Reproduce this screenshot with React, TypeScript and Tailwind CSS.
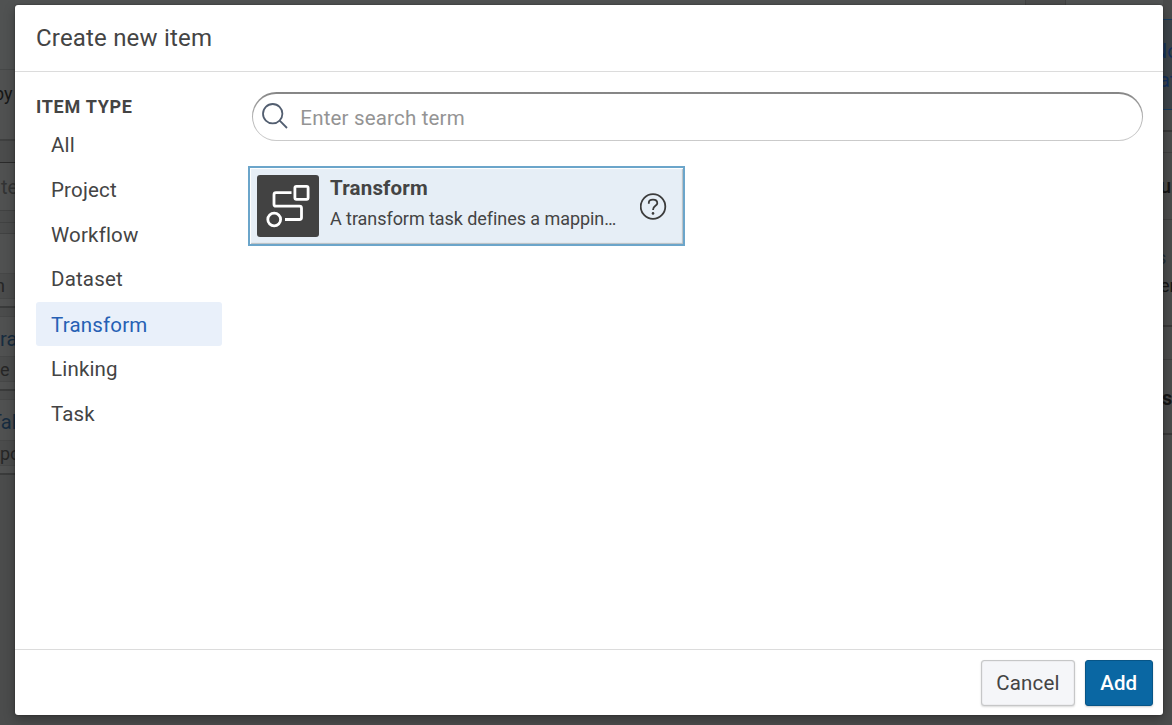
import React from "react";

const itemTypes = ["All", "Project", "Workflow", "Dataset", "Transform", "Linking", "Task"];
const itemHeights = [
  "h-[45px] pt-[1.5px]",
  "h-[45px] pt-[1.5px]",
  "h-[45px] pt-[1.5px]",
  "h-[44px]",
  "h-[44px] mt-[1px] pt-[2px]",
  "h-[44px] pt-[2.5px]",
  "h-[45px] pt-[3.5px]",
];

type StripProps = { className: string; text?: string; textClass?: string };

function Strip({ className, text, textClass = "" }: StripProps) {
  return (
    <div className={`flex shrink-0 items-center overflow-hidden whitespace-nowrap ${className}`}>
      {text && <span className={textClass}>{text}</span>}
    </div>
  );
}

function LeftPage() {
  return (
    <div className="flex w-[15px] shrink-0 flex-col overflow-hidden text-[18px] text-[#262626]">
      <Strip className="h-[70px] border-b border-[#464848] bg-[#505252]" />
      <Strip className="h-[71px] border-b-2 border-[#3f4040] bg-[#505151]" text="by" textClass="-ml-[6px] -mt-[22px] text-[#161616]" />
      <Strip className="h-[22px] border-b border-[#2b2b2b] bg-[#4b4c4c]" />
      <Strip className="h-[48px] border-b border-[#414242] bg-[#505151] text-[20px]" text="te" textClass="ml-[1px] text-[#333434]" />
      <Strip className="h-[12px] border-b border-[#414242]" />
      <Strip className="h-[11px] border-b border-[#414242]" />
      <Strip className="h-[40px] border-b border-[#464747] bg-[#505151]" />
      <Strip className="h-[25px] border-b border-[#464747]" text="n" textClass="-ml-[5px] -mt-[1px]" />
      <Strip className="h-[9px] border-b-2 border-[#3a3b3b] bg-[#505151]" />
      <Strip className="h-[9px] border-b border-[#464747]" />
      <Strip className="h-[40px] border-b border-[#464747] bg-[#505151] text-[20px]" text="ra" textClass="mt-[4px] text-[#172c40]" />
      <Strip className="h-[25px] border-b border-[#464747]" text="e" />
      <Strip className="h-[9px] border-b-2 border-[#3a3b3b] bg-[#505151]" />
      <Strip className="h-[9px] border-b border-[#464747]" />
      <Strip className="h-[41px] border-b border-[#464747] bg-[#505151] text-[20px]" text="Tal" textClass="-ml-[10px] mt-[4px] text-[#172c40]" />
      <Strip className="h-[25px] border-b border-[#464747]" text="po" />
      <Strip className="h-[9px] border-b-2 border-[#3a3b3b] bg-[#505151]" />
    </div>
  );
}

function RightPage() {
  return (
    <div className="flex w-[9px] shrink-0 flex-col overflow-hidden text-[18px] text-[#161616]">
      <Strip className="h-[19px] bg-[#4a4b4b]" />
      <div className="flex h-[91px] shrink-0 flex-col justify-center overflow-hidden whitespace-nowrap border-y border-[#193a5c] bg-[#3d4449] text-[20px] leading-[29px] text-[#14315c]">
        <span className="-ml-[10px] mt-[3px]">No</span>
        <span className="-ml-[4px]">at</span>
      </div>
      <Strip className="h-[22px] border-b-2 border-[#393939]" />
      <Strip className="h-[21px] border-b border-[#404041]" />
      <Strip className="h-[67px] border-b border-[#404041] text-[20px] font-medium" text="u" textClass="-ml-[3px]" />
      <div className="flex h-[107px] shrink-0 flex-col justify-center overflow-hidden whitespace-nowrap border-b-2 border-[#393939] leading-[28px]">
        <span className="-ml-[6px] -mt-[2px] text-[#232e38]">s</span>
        <span className="-ml-[3px]">en</span>
      </div>
      <Strip className="h-[33px] border-b border-[#404041]" />
      <Strip className="h-[75px] border-b-2 border-[#393939] text-[20px] font-bold" text="s" textClass="mt-[2px] -ml-[1px]" />
    </div>
  );
}

function TransformIcon() {
  return (
    <svg className="size-[62px]" viewBox="0 0 62 62" fill="none" stroke="#fff" strokeWidth="2.8">
      <rect x="37.9" y="11.3" width="13.2" height="13" rx="1.5" />
      <path d="M34.5 17.7H19Q17 17.7 17 19.7V29.2Q17 31.2 19 31.2H42.5Q44.5 31.2 44.5 33.2V42.5Q44.5 44.5 42.5 44.5H28" />
      <circle cx="17.2" cy="44.5" r="6.4" />
    </svg>
  );
}

function SearchField() {
  return (
    <label className="ml-[4px] flex h-[49px] w-[891px] items-center rounded-full bg-[linear-gradient(to_bottom,#858585,#b0b0b0_50%,#cbcbcb)] px-[1.3px] pb-[1.5px] pt-[2px]">
      <span className="flex h-full flex-1 items-center rounded-full bg-white pl-[9px]">
        <svg className="-mt-[1px] size-[26px] shrink-0" viewBox="0 0 26 26" fill="none" stroke="#525e70" strokeWidth="1.8">
          <circle cx="10.7" cy="10.7" r="9.7" />
          <path d="M17.7 17.7L25 25" />
        </svg>
        <input
          className="ml-[12px] mr-[24px] h-full flex-1 bg-transparent pt-[2px] text-[20.5px] tracking-[0.18px] outline-none placeholder:text-[#949494]"
          placeholder="Enter search term"
        />
      </span>
    </label>
  );
}

export default function App() {
  return (
    <div className="flex h-[725px] w-[1172px] flex-col overflow-hidden bg-[#4b4c4c] font-[Roboto,sans-serif] text-[#444]">
      <div className="flex h-[725px]">
        <LeftPage />
        <div className="flex w-[1148px] shrink-0 flex-col">
          <div className="flex h-[5px] shrink-0 justify-end bg-[#515353]">
            <div className="w-[41px] border-x border-[#424343] bg-[#4c4d4d]" />
            <div className="w-[97px]" />
          </div>
          <main className="relative flex h-[710px] shrink-0 flex-col rounded-[3px] bg-white shadow-[0_4px_12px_rgba(0,0,0,.3),0_0_2px_rgba(0,0,0,.4)]">
            <header className="flex h-[67px] shrink-0 items-center border-b border-[#dcdcdc] pl-[21px]">
              <h1 className="text-[24px] tracking-[0.19px]">Create new item</h1>
            </header>
            <div className="flex min-h-0 flex-1">
              <nav className="w-[207px] shrink-0 pl-[21px] pt-[24px]">
                <h2 className="h-[26px] text-[18px] font-bold leading-[22px] tracking-[0.72px]">ITEM TYPE</h2>
                <ul className="text-[20.5px]">
                  {itemTypes.map((item, i) => (
                    <li
                      key={item}
                      className={`flex w-[186px] items-center rounded-[3px] pl-[15px] tracking-[0.18px] ${itemHeights[i]} ${
                        item === "Transform" ? "bg-[#e9f0fa] text-[#2660b4]" : ""
                      }`}
                    >
                      {item}
                    </li>
                  ))}
                </ul>
              </nav>
              <section className="ml-[26px] flex-1 pt-[20px]">
                <SearchField />
                <article className="mt-[25px] flex h-[80px] w-[437px] items-center border-2 border-[#6ba5ca] bg-[#e6eef6] pl-[6.5px] pr-[16px] shadow-[inset_1px_1px_1px_white,inset_-1px_-1px_1px_#b9bec2]">
                  <div className="shrink-0 rounded-[3px] bg-[#424242]">
                    <TransformIcon />
                  </div>
                  <div className="-mt-[3px] ml-[11.5px] w-[288px] shrink-0">
                    <h3 className="text-[20.5px] font-bold leading-[29px] tracking-[0.18px]">Transform</h3>
                    <p className="truncate text-[18px] leading-[32px] tracking-[-0.06px]">A transform task defines a mapping from sources</p>
                  </div>
                  <svg className="ml-auto mt-[1px] size-[27px]" viewBox="0 0 27 27" fill="none" stroke="#3b3b3b" strokeWidth="1.8">
                    <circle cx="13" cy="13.5" r="12.3" />
                    <path d="M8.8 10.7V9.9C8.8 7.8 10.5 6.7 13 6.7s4.3 1.3 4.3 3.5c0 2.6-4.2 2.7-4.2 6.2v.5" />
                    <circle cx="13" cy="20.4" r="1.3" fill="#3b3b3b" stroke="none" />
                  </svg>
                </article>
              </section>
            </div>
            <footer className="flex h-[66px] shrink-0 items-start justify-end gap-[10px] border-t border-[#dcdcdc] pr-[10.5px] pt-[10px] text-[20.5px]">
              <button className="h-[46px] w-[94px] rounded-[3px] border border-[#c6c7c8] bg-[#f5f6f9] tracking-[0.18px] shadow-[inset_0_0_1px_#aaa,0_1px_2px_rgba(0,0,0,.15)]">Cancel</button>
              <button className="h-[46px] w-[67.5px] rounded-[3px] border border-[#075587] bg-[#0a67a3] font-medium tracking-[0.1px] text-white shadow-[0_1px_2px_rgba(0,0,0,.2)]">Add</button>
            </footer>
          </main>
        </div>
        <RightPage />
      </div>
    </div>
  );
}
